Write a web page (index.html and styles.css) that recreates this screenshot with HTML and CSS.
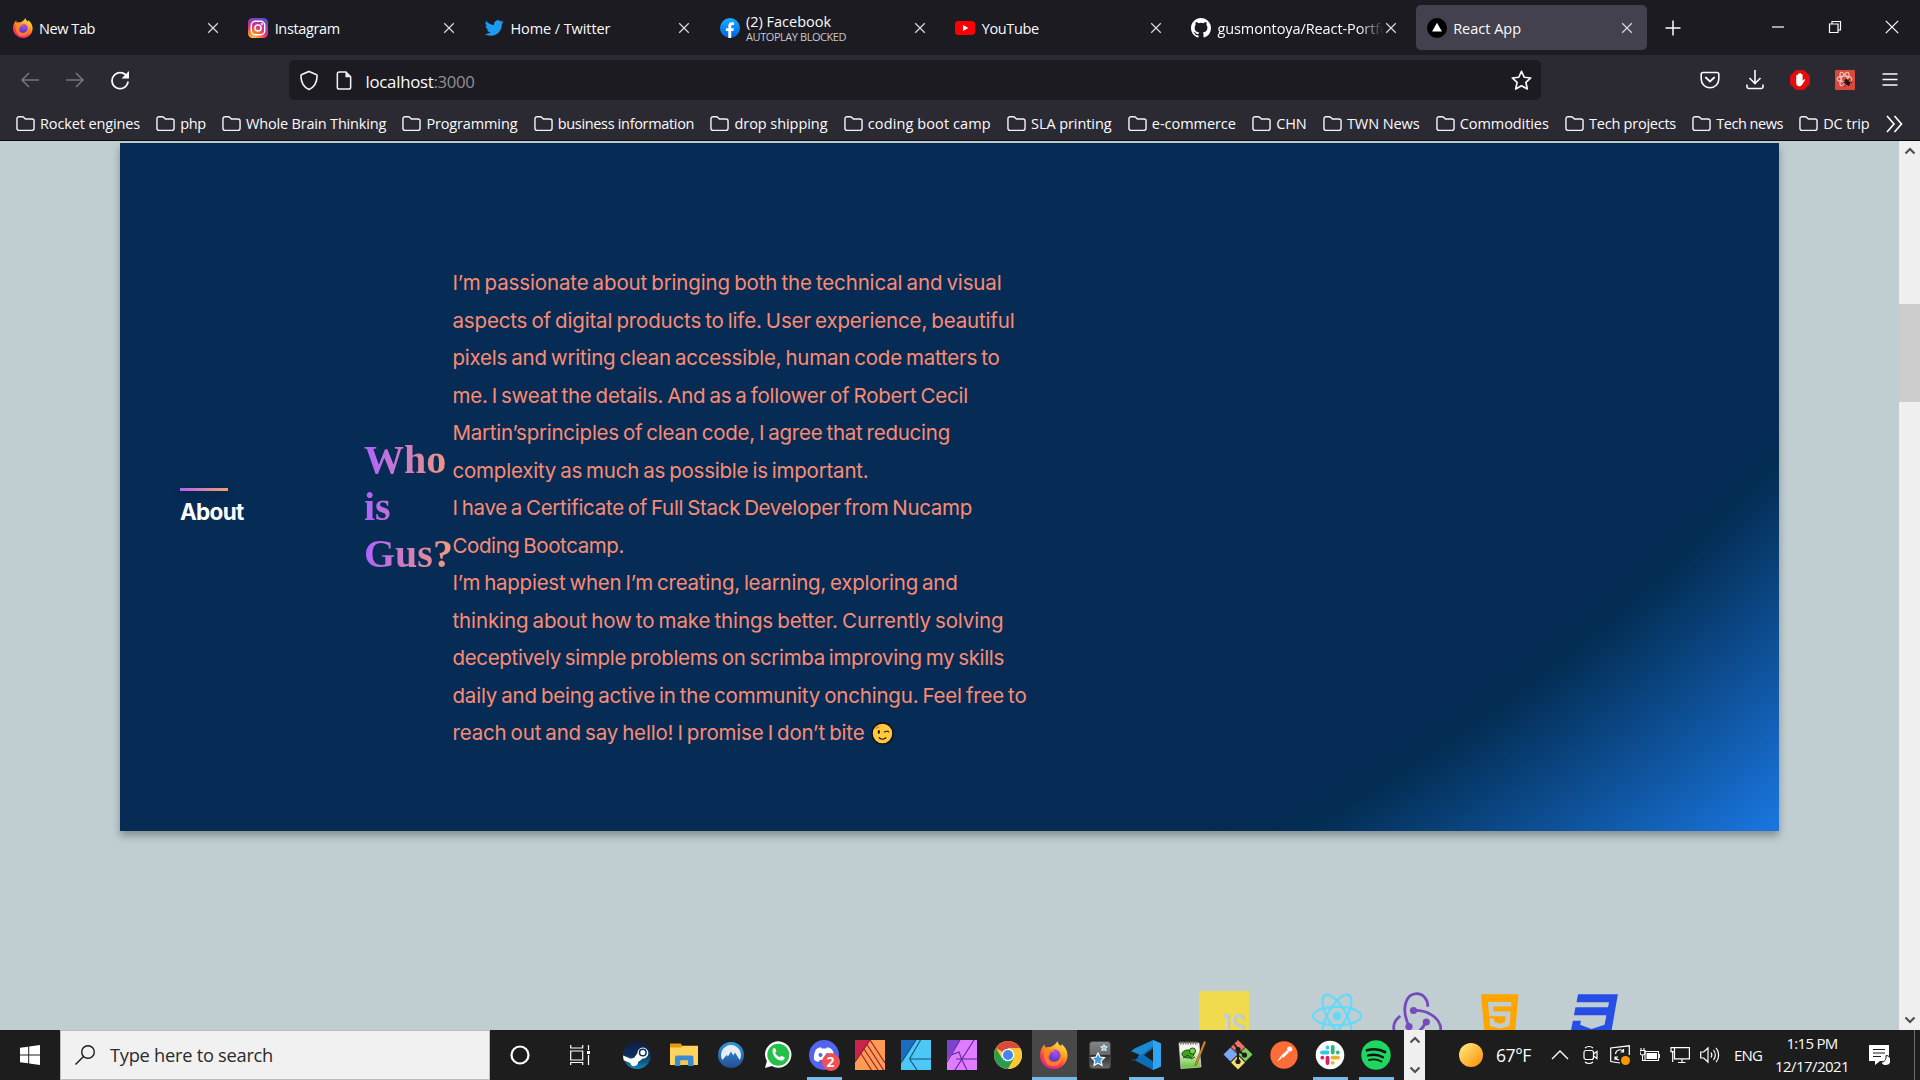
FILE: index.html
```html
<!DOCTYPE html>
<html lang="en">
<head>
<meta charset="utf-8">
<title>React App</title>
<link rel="stylesheet" href="styles.css">
</head>
<body>
<svg class="defs" width="0" height="0" aria-hidden="true">
  <defs>
    <linearGradient id="ffBody" x1=".8" y1="0" x2=".25" y2="1"><stop offset="0" stop-color="#fff04a"/><stop offset=".4" stop-color="#ff9a1f"/><stop offset=".7" stop-color="#ff3a4a"/><stop offset="1" stop-color="#e0219a"/></linearGradient>
    <radialGradient id="ffGlobe" cx=".6" cy=".25" r=".8"><stop offset="0" stop-color="#b04bf5"/><stop offset="1" stop-color="#4a3cc4"/></radialGradient>
    <radialGradient id="ig" cx=".25" cy="1.05" r="1.15"><stop offset="0" stop-color="#ffd95a"/><stop offset=".3" stop-color="#ff7a2f"/><stop offset=".6" stop-color="#d62e87"/><stop offset="1" stop-color="#5a4bd6"/></radialGradient>
    <linearGradient id="fb" x1="0" y1="0" x2="0" y2="1"><stop offset="0" stop-color="#19aeff"/><stop offset="1" stop-color="#0062e0"/></linearGradient>
    <linearGradient id="steam" x1="0" y1="0" x2="0" y2="1"><stop offset="0" stop-color="#131a3c"/><stop offset=".5" stop-color="#0d2f5c"/><stop offset="1" stop-color="#1387b8"/></linearGradient>
    <linearGradient id="nord" x1="0" y1="0" x2="0" y2="1"><stop offset="0" stop-color="#2e9bdc"/><stop offset="1" stop-color="#254b92"/></linearGradient>
    <linearGradient id="star" x1="0" y1="0" x2="0" y2="1"><stop offset="0" stop-color="#858585"/><stop offset=".48" stop-color="#6a6a6a"/><stop offset=".5" stop-color="#2c2c2c"/><stop offset="1" stop-color="#6c6c6c"/></linearGradient>
    <linearGradient id="sun" x1="0" y1="0" x2="1" y2="1"><stop offset=".1" stop-color="#ffe478"/><stop offset="1" stop-color="#ff8c00"/></linearGradient>
    <linearGradient id="npp" x1="0" y1="0" x2="0" y2="1"><stop offset=".3" stop-color="#f4f6f0"/><stop offset="1" stop-color="#5fc428"/></linearGradient>
    <symbol id="firefox" viewBox="0 0 28 28">
      <path d="M17.500 0c.3 2.800 2 4 3.700 5.300l.3-2.200c3.400 2.500 5.900 6.600 6 11.100C27.500 22 21.500 28 14 28S0 22 0 14.500C0 10 1.500 6.500 4.300 3.400l1.200 3.200c1.500-.6 3-.7 4.400-.4C12.500 4.900 16 3.500 17.500 0z" fill="url(#ffBody)"/>
      <circle cx="14.500" cy="14.500" r="6" fill="url(#ffGlobe)"/>
      <path d="M4 8c3-1 5-.6 6.500.6 1.700-.2 3.300.1 4.500.8-.8 1.600-3.300 1.700-4.700 2.500 0 1.500-.7 2-1.400 3-1.200 3 1 6 4.600 6.200 4.500.2 7-3 6.900-6.100 3 5-1 10.300-7 10.300C7 25.300 2 19 4 8z" fill="#ff8a26" opacity=".85"/>
    </symbol>
    <symbol id="folder" viewBox="0 0 20 18"><path d="M1 13.500V3.500A2.200 2.200 0 0 1 3.200 1.300h3.300c.8 0 1.300.3 1.800.8L9.900 3.700h6.900A2.200 2.200 0 0 1 19 5.900v7.600a2.200 2.200 0 0 1-2.200 2.200H3.200A2.200 2.200 0 0 1 1 13.500z" fill="none" stroke="#f3f3f5" stroke-width="1.500"/></symbol>
    <symbol id="close" viewBox="0 0 12 12"><path d="M1.200 1.200l9.600 9.600M10.800 1.200l-9.600 9.600" stroke="#d8d8dc" stroke-width="1.250" fill="none"/></symbol>
    <symbol id="up" viewBox="0 0 12 8"><path d="M1.500 6.500L6 2l4.500 4.500" stroke="#505050" stroke-width="2.200" fill="none"/></symbol>
    <symbol id="down" viewBox="0 0 12 8"><path d="M1.500 1.500L6 6l4.500-4.500" stroke="#505050" stroke-width="2.200" fill="none"/></symbol>
  </defs>
</svg>

<header class="tabs">
  <div class="tab"><svg class="fav"><use href="#firefox"/></svg><span class="lbl" data-w="56">New Tab</span><svg class="x"><use href="#close"/></svg></div>
  <div class="tab"><svg class="fav" viewBox="0 0 20 20"><rect width="20" height="20" rx="4.500" fill="url(#ig)"/><rect x="3.300" y="3.300" width="13.400" height="13.400" rx="4" fill="none" stroke="#fff" stroke-width="1.500"/><circle cx="10" cy="10" r="3.100" fill="none" stroke="#fff" stroke-width="1.500"/><circle cx="14" cy="6" r="1" fill="#fff"/></svg><span class="lbl" data-w="65">Instagram</span><svg class="x"><use href="#close"/></svg></div>
  <div class="tab"><svg class="fav" viewBox="0 0 24 24"><path fill="#1d9bf0" d="M23.643 4.937c-.835.370-1.732.620-2.675.733.962-.576 1.700-1.490 2.048-2.578-.900.534-1.897.922-2.958 1.130-.850-.904-2.060-1.470-3.400-1.470-2.572 0-4.658 2.086-4.658 4.660 0 .364.042.718.120 1.060-3.873-.195-7.304-2.050-9.602-4.868-.400.690-.630 1.490-.630 2.342 0 1.616.823 3.043 2.072 3.878-.764-.025-1.482-.234-2.110-.583v.060c0 2.257 1.605 4.140 3.737 4.568-.392.106-.803.162-1.227.162-.300 0-.593-.028-.877-.082.593 1.850 2.313 3.198 4.352 3.234-1.595 1.250-3.604 1.995-5.786 1.995-.376 0-.747-.022-1.112-.065 2.062 1.323 4.510 2.093 7.140 2.093 8.570 0 13.255-7.098 13.255-13.254 0-.200-.005-.402-.014-.602.910-.658 1.700-1.477 2.323-2.410z"/></svg><span class="lbl" data-w="100">Home / Twitter</span><svg class="x"><use href="#close"/></svg></div>
  <div class="tab"><svg class="fav" viewBox="0 0 20 20"><circle cx="10" cy="10" r="10" fill="url(#fb)"/><path d="M8.300 20v-6.900H5.900v-2.900h2.400V8.100c0-2.500 1.400-3.800 3.600-3.800.7 0 1.500.1 2.100.2V7h-1.200c-1.200 0-1.600.7-1.600 1.500v1.700h2.700l-.5 2.900h-2.200V20z" fill="#fff"/></svg><span class="stack"><span class="lbl" data-w="85">(2) Facebook</span><span class="sub" data-w="100">AUTOPLAY BLOCKED</span></span><svg class="x"><use href="#close"/></svg></div>
  <div class="tab"><svg class="fav" viewBox="0 0 20 20"><rect y="3" width="20" height="14" rx="3.200" fill="#f00"/><path d="M8 7l5.300 3L8 13z" fill="#fff"/></svg><span class="lbl" data-w="57">YouTube</span><svg class="x"><use href="#close"/></svg></div>
  <div class="tab"><svg class="fav" viewBox="0 0 16 16"><path fill="#fff" d="M8 0C3.580 0 0 3.580 0 8c0 3.540 2.290 6.530 5.470 7.590.400.070.550-.170.550-.380 0-.190-.010-.820-.010-1.490-2.010.370-2.530-.490-2.690-.940-.090-.230-.480-.940-.820-1.130-.280-.150-.680-.520-.010-.530.630-.010 1.080.580 1.230.820.720 1.210 1.870.870 2.330.660.070-.520.280-.870.510-1.070-1.780-.200-3.640-.890-3.640-3.950 0-.870.310-1.590.820-2.150-.080-.200-.360-1.020.080-2.120 0 0 .670-.210 2.200.820a7.600 7.600 0 0 1 4 0c1.530-1.040 2.200-.820 2.200-.820.440 1.100.160 1.920.080 2.120.510.560.820 1.270.820 2.150 0 3.070-1.870 3.750-3.650 3.950.290.250.540.730.540 1.480 0 1.070-.010 1.930-.010 2.200 0 .210.150.460.550.380A8.010 8.010 0 0 0 16 8c0-4.420-3.580-8-8-8z"/></svg><span class="lbl clip"><span data-w="187">gusmontoya/React-Portfolio</span></span><svg class="x"><use href="#close"/></svg></div>
  <div class="tab active"><svg class="fav" viewBox="0 0 20 20"><circle cx="10" cy="10" r="10"/><path d="M10 4.800l4.900 8.600H5.100z" fill="#fff"/></svg><span class="lbl" data-w="68">React App</span><svg class="x"><use href="#close"/></svg></div>
  <svg class="plus" viewBox="0 0 16 16"><path d="M8 .5v15M.5 8h15" stroke="#fbfbfe" stroke-width="1.500"/></svg>
  <div class="winctl">
    <svg viewBox="0 0 14 14"><path d="M1 7h12" stroke="#fff" stroke-width="1.200"/></svg>
    <svg viewBox="0 0 14 14"><path d="M1.500 4h8.500v8.500H1.500zM4 4V1.500h8.500V10H10" fill="none" stroke="#fff" stroke-width="1.200"/></svg>
    <svg viewBox="0 0 14 14"><path d="M.8.800l12.400 12.400M13.200.8L.8 13.200" stroke="#fff" stroke-width="1.200"/></svg>
  </div>
</header>

<nav class="toolbar">
  <div class="navbtns">
    <svg viewBox="0 0 20 20"><path d="M19 10H2M9 3l-7 7 7 7" fill="none" stroke="#77767e" stroke-width="1.500"/></svg>
    <svg viewBox="0 0 20 20"><path d="M1 10h17M11 3l7 7-7 7" fill="none" stroke="#77767e" stroke-width="1.500"/></svg>
    <svg viewBox="0 0 20 20"><path d="M17.600 8A8 8 0 1 0 18 11.500" fill="none" stroke="#fbfbfe" stroke-width="1.800"/><path d="M19 1v7.500h-7.500z" fill="#fbfbfe"/></svg>
  </div>
  <div class="url">
    <svg class="shield" viewBox="0 0 20 22"><path d="M10 1.500l7.500 3.200c.8.300 1 .8 1 1.600C18.300 13 15 18.300 10 20.500 5 18.300 1.700 13 1.500 6.300c0-.8.200-1.300 1-1.600z" fill="none" stroke="#f3f3f5" stroke-width="1.700"/></svg>
    <svg class="page" viewBox="0 0 16 20"><path d="M3 1h7l5 5v11a2 2 0 0 1-2 2H3a2 2 0 0 1-2-2V3a2 2 0 0 1 2-2z" fill="none" stroke="#f3f3f5" stroke-width="1.600"/><path d="M9.500 1v5.500H15z" fill="#f3f3f5"/></svg>
    <span class="addr"><span data-w="68">localhost</span><span class="port" data-w="41">:3000</span></span>
    <svg class="bstar" viewBox="0 0 20 20"><path d="M10 1.200l2.600 5.700 6.200.7-4.600 4.200 1.300 6.300L10 15l-5.500 3.100 1.300-6.300L1.200 7.600l6.200-.7z" fill="none" stroke="#fbfbfe" stroke-width="1.600" stroke-linejoin="round"/></svg>
  </div>
  <div class="tools">
    <svg viewBox="0 0 20 20"><path d="M3 2.500h14a1.800 1.800 0 0 1 1.800 1.800V9A8.800 8.800 0 0 1 1.200 9V4.300A1.800 1.800 0 0 1 3 2.500z" fill="none" stroke="#fbfbfe" stroke-width="1.600"/><path d="M5.800 7.500L10 11.500l4.200-4" fill="none" stroke="#fbfbfe" stroke-width="1.800" stroke-linecap="round"/></svg>
    <svg viewBox="0 0 20 20"><path d="M10 0v13M4.500 8l5.500 5.500L15.500 8M2 14.500v2.200A1.800 1.800 0 0 0 3.800 18.500h12.400a1.800 1.800 0 0 0 1.800-1.800v-2.200" fill="none" stroke="#fbfbfe" stroke-width="1.600"/></svg>
    <svg viewBox="0 0 20 20"><path d="M6 0h8l6 6v8l-6 6H6l-6-6V6z" fill="#e40d0d"/><path d="M6.200 10.500V5.800a.8.8 0 0 1 1.600 0V4.400a.8.8 0 0 1 1.600 0v-.6a.8.8 0 0 1 1.600 0v1a.8.8 0 0 1 1.600 0v6l1.300-1.300c.8-.6 1.500.1 1 .8l-3 4.700c-.7 1-1.500 1.300-2.700 1.300-2 0-3-1.500-3-3.500z" fill="#fff"/></svg>
    <svg viewBox="0 0 20 20"><rect width="20" height="20" rx="1" fill="#d9483b"/><g fill="none" stroke="#f5c7c0" stroke-width="1.100"><ellipse cx="9.500" cy="9" rx="7.500" ry="3"/><ellipse cx="9.500" cy="9" rx="7.500" ry="3" transform="rotate(60 9.500 9)"/><ellipse cx="9.500" cy="9" rx="7.500" ry="3" transform="rotate(120 9.500 9)"/></g><g transform="rotate(-30 12 12)"><ellipse cx="12" cy="12.500" rx="2.200" ry="3.700" fill="#301010"/><path d="M8 10l8 5M16 10l-8 5M8 12.500h8" stroke="#301010" stroke-width=".8"/></g></svg>
    <svg viewBox="0 0 20 20"><path d="M2.500 4h15M2.500 9.500h15M2.500 15h15" stroke="#fbfbfe" stroke-width="1.500"/></svg>
  </div>
</nav>

<nav class="bookmarks">
  <a><svg><use href="#folder"/></svg><span data-w="100">Rocket engines</span></a>
  <a><svg><use href="#folder"/></svg><span data-w="25.500">php</span></a>
  <a><svg><use href="#folder"/></svg><span data-w="140">Whole Brain Thinking</span></a>
  <a><svg><use href="#folder"/></svg><span data-w="91">Programming</span></a>
  <a><svg><use href="#folder"/></svg><span data-w="136.500">business information</span></a>
  <a><svg><use href="#folder"/></svg><span data-w="93">drop shipping</span></a>
  <a><svg><use href="#folder"/></svg><span data-w="123">coding boot camp</span></a>
  <a><svg><use href="#folder"/></svg><span data-w="80.500">SLA printing</span></a>
  <a><svg><use href="#folder"/></svg><span data-w="84">e-commerce</span></a>
  <a><svg><use href="#folder"/></svg><span data-w="30.500">CHN</span></a>
  <a><svg><use href="#folder"/></svg><span data-w="72.500">TWN News</span></a>
  <a><svg><use href="#folder"/></svg><span data-w="89">Commodities</span></a>
  <a><svg><use href="#folder"/></svg><span data-w="87">Tech projects</span></a>
  <a><svg><use href="#folder"/></svg><span data-w="66.500">Tech news</span></a>
  <a><svg><use href="#folder"/></svg><span data-w="46.500">DC trip</span></a>
  <svg class="more" viewBox="0 0 17 18"><path d="M1 1l7 8-7 8M8.500 1l7 8-7 8" fill="none" stroke="#fbfbfe" stroke-width="1.700"/></svg>
</nav>

<div class="viewport">
  <main class="page-body">
    <section class="card">
      <div class="about"><i class="bar"></i><h3><span data-w="63.500">About</span></h3></div>
      <h1 class="who">Who<br>is<br>Gus?</h1>
      <p class="bio">
        <span data-w="549">I’m passionate about bringing both the technical and visual</span><br>
        <span data-w="562">aspects of digital products to life. User experience, beautiful</span><br>
        <span data-w="547">pixels and writing clean accessible, human code matters to</span><br>
        <span data-w="515.500">me. I sweat the details. And as a follower of Robert Cecil</span><br>
        <span data-w="497.500">Martin’sprinciples of clean code, I agree that reducing</span><br>
        <span data-w="416">complexity as much as possible is important.</span><br>
        <span data-w="519.500">I have a Certificate of Full Stack Developer from Nucamp</span><br>
        <span data-w="171.500">Coding Bootcamp.</span><br>
        <span data-w="505">I’m happiest when I’m creating, learning, exploring and</span><br>
        <span data-w="551">thinking about how to make things better. Currently solving</span><br>
        <span data-w="551.500">deceptively simple problems on scrimba improving my skills</span><br>
        <span data-w="574">daily and being active in the community onchingu. Feel free to</span><br>
        <span data-w="412">reach out and say hello! I promise I don’t bite</span><svg class="wink" viewBox="0 0 22 22"><circle cx="11" cy="11" r="10" fill="#ffc83d" stroke="#101010" stroke-width="1.300"/><ellipse cx="7.500" cy="9.500" rx="1" ry="1.800" fill="#111"/><path d="M12.500 10c1-1.400 3.500-1.600 4.800-.3" fill="none" stroke="#111" stroke-width="1.100"/><path d="M4.500 6.500c.8-1.500 2.200-2 3.500-1.700" fill="none" stroke="#d08a10" stroke-width="1.200"/><path d="M7.500 14.800c2 2 5 2 7 0" fill="none" stroke="#111" stroke-width="1.200"/></svg>
      </p>
    </section>
    <section class="skills">
      <svg class="js" viewBox="0 0 50 50"><rect width="50" height="50" fill="#f0db4f"/><text x="20" y="46" font-size="34" font-weight="700" textLength="27" lengthAdjust="spacingAndGlyphs" fill="#c0ced2">JS</text></svg>
      <svg class="react" viewBox="0 0 50 50"><g fill="none" stroke="#61dafb" stroke-width="2.200"><ellipse cx="25" cy="25" rx="24" ry="9.200"/><ellipse cx="25" cy="25" rx="24" ry="9.200" transform="rotate(60 25 25)"/><ellipse cx="25" cy="25" rx="24" ry="9.200" transform="rotate(120 25 25)"/></g><circle cx="25" cy="25" r="4.300" fill="#61dafb"/></svg>
      <svg class="redux" viewBox="0 0 50 50"><g fill="none" stroke="#764abc" stroke-width="2.800"><path d="M35.800 15.700C36 8 31 2.700 24.500 2.700 15 2.700 8 16 17 35"/><path d="M21.500 19.500C33 19 45 24 48.500 35c1 5-1 9-4 10"/><path d="M8.300 25C3 29 .5 35 2.500 41c3 6 12 8 21 2 4-2.500 8-7 10.500-12"/></g><g fill="#764abc"><circle cx="21.500" cy="19.500" r="3.600"/><circle cx="17" cy="35.500" r="3.600"/><circle cx="34.300" cy="31" r="3.600"/></g></svg>
      <svg class="html5" viewBox="0 0 384 512"><path fill="#ffa500" d="M0 32l34.900 395.800L191.500 480l157.600-52.200L384 32H0zm308.200 127.900H124.400l4.100 49.400h175.600l-13.600 148.400-97.900 27v.3h-1.100l-98.700-27.300-6-75.800h47.700L138 320l53.500 14.500 53.700-14.500 6-62.200H84.300L71.500 112.200h241.100l-4.400 47.700z"/></svg>
      <svg class="css3" viewBox="0 0 512 512"><path fill="#264de4" d="M480 32l-64 368-223.300 80L0 400l19.600-94.800h82l-8 40.600L210 390.200l134.100-44.400 18.800-97.100H29.500l16-82h333.200l10.500-52.700H56.400l16.300-82H480z"/></svg>
    </section>
  </main>
  <aside class="scrollbar"><svg><use href="#up"/></svg><i class="thumb"></i><svg><use href="#down"/></svg></aside>
</div>

<footer class="taskbar">
  <div class="start"><svg viewBox="0 0 20 20"><path d="M0 2.800L8.200 1.700v7.800H0zM9.200 1.500L20 0v9.500H9.200zM0 10.500h8.200v7.800L0 17.200zM9.200 10.500H20V20L9.200 18.500z" fill="#fff"/></svg></div>
  <div class="search"><svg viewBox="0 0 20 20"><circle cx="13" cy="7" r="6.300" fill="none" stroke="#1b1b1b" stroke-width="1.400"/><path d="M8.500 11.500L.5 19.500" stroke="#1b1b1b" stroke-width="1.400"/></svg><span data-w="163">Type here to search</span></div>
  <div class="sys">
    <svg viewBox="0 0 20 20"><circle cx="10" cy="10" r="8.500" fill="none" stroke="#fff" stroke-width="2.200"/></svg>
    <svg viewBox="0 0 20 20"><path d="M.7 0v3h12V0M.7 6h12v9H.7zM.7 20v-2.500h12V20M18.500 0v5M18.500 10v10" fill="none" stroke="#fff" stroke-width="1.200"/><path d="M17 6h3v3h-3z" fill="#fff"/></svg>
  </div>
  <div class="apps">
    <div class="app wide"><svg viewBox="0 0 30 30"><circle cx="15" cy="15" r="14" fill="url(#steam)"/><path d="M1 15.500l8 3.300c1-.6 2-.8 3-.7l3.400-4.900a5.500 5.500 0 1 1 5.500 5.400l-4.800 3.500a4 4 0 0 1-7.900.9L1.700 20.300z" fill="#fff"/><circle cx="20.800" cy="12.500" r="3.300" fill="#fff" stroke="#0d2f5c" stroke-width="1.500"/></svg></div>
    <div class="app wide"><svg viewBox="0 0 30 30"><path d="M1 3.500h10.500L14 6.200V12H1z" fill="#e09e0c"/><path d="M1 7.500h11l2-1.800h15V25H1z" fill="#ffd35c"/><path d="M6 26v-8.500a2 2 0 0 1 2-2h14.500a2 2 0 0 1 2 2V26H19v-5.500h-7.500V26z" fill="#3b8bd0"/><path d="M11.500 20.500H19V25h-7.500z" fill="#f7c548"/></svg></div>
    <div class="app wide"><svg viewBox="0 0 30 30"><circle cx="15" cy="15" r="13" fill="url(#nord)"/><path d="M6.300 20A10 10 0 1 1 23.700 20L19 12.500l-1.700 3-2.300-4-3 5-1.200-1.500z" fill="#e6edf5"/></svg></div>
    <div class="app wide"><svg viewBox="0 0 30 30"><path d="M2 28l1.900-6.700A13.200 13.200 0 1 1 8.700 26z" fill="#fff"/><circle cx="15.300" cy="14.700" r="11" fill="#25c04a"/><path d="M10.200 8.500c1-1 1.800-.6 2.300.6l.8 2c.2.700-.9 1.500-1.200 1.900 1.100 2 2.600 3.400 4.900 4.300.6-.4 1.200-1.700 1.900-1.400l2.500 1.300c.6.400.1 2.300-1.300 3-4.600 2.200-13-5.500-9.900-11.700z" fill="#fff"/></svg></div>
    <div class="app on"><svg viewBox="0 0 30 30"><circle cx="15" cy="15" r="15" fill="#5663ee"/><path d="M7 9.500c1.800-1.500 3.500-2 5-2.200l.7 1.200h4.600l.7-1.200c1.500.2 3.200.7 5 2.200 1.700 3 2.400 6.500 2 10.300-1.500 1.200-3 1.800-4.500 2.100l-1.200-2h-8.600l-1.200 2c-1.500-.3-3-.9-4.500-2.100-.4-3.800.3-7.300 2-10.300z" fill="#fff"/><circle cx="11.500" cy="15" r="2" fill="#5663ee"/><circle cx="18.500" cy="15" r="2" fill="#5663ee"/></svg><b class="badge">2</b></div>
    <div class="app"><svg viewBox="0 0 30 30"><path d="M0 0h30v30H0z" fill="#ff9b50"/><path d="M0 0h15L0 22z" fill="#c9244b"/><path d="M15 0L0 22M15 0l15 23M12 4.500L28.500 30M9 9l14 21M6 13.500L16.500 30" stroke="#8d1d3c" stroke-width="1.100" fill="none"/></svg></div>
    <div class="app"><svg viewBox="0 0 30 30"><path d="M0 0h30v30H0z" fill="#4dc8f5"/><path d="M0 0h15L0 23z" fill="#1c6cc0"/><path d="M0 23L15 0M8.500 19L19.500 0M8.500 19H30M8.500 19l7.500 11" stroke="#154f82" stroke-width="1.100" fill="none"/></svg></div>
    <div class="app"><svg viewBox="0 0 30 30"><path d="M0 0h30v30H0z" fill="#e07cff"/><path d="M0 0h13L0 20z" fill="#7a45cc"/><path d="M13 0L0 22M4 15l8-3 3 8M27 0L8 30M9 19h21M15 20l5 10" stroke="#5c2896" stroke-width="1.100" fill="none"/></svg></div>
    <div class="app"><svg viewBox="0 0 30 30"><circle cx="15" cy="15" r="14" fill="#fcc934"/><path d="M15 15L2.900 8A14 14 0 0 1 27.100 8z" fill="#d94a3d"/><path d="M2.900 8A14 14 0 0 0 15 29l6-10.500L15 15 9 18.500z" fill="#2a9b52"/><path d="M27.100 8H15v7l6 3.500L15 29A14 14 0 0 0 27.100 8z" fill="#fcc934"/><circle cx="15" cy="15" r="6.300" fill="#fff"/><circle cx="15" cy="15" r="5" fill="#4285f4"/></svg></div>
    <div class="app on current"><svg><use href="#firefox"/></svg></div>
    <div class="app"><svg viewBox="0 0 30 30"><rect x="4.500" y="1.500" width="21" height="27" rx="3" fill="url(#star)" stroke="#444"/><path d="M13 13l2 4 4.500.7-3.300 3.100.8 4.500-4-2.200-4 2.200.8-4.500-3.300-3.100 4.500-.7z" fill="#3d9be0" stroke="#fff" stroke-width="1.200"/><path d="M19 4.500l1 2 2.300.3-1.600 1.600.4 2.300-2.100-1.100-2.100 1.100.4-2.300-1.600-1.600 2.300-.3z" fill="#8cc8ee" stroke="#fff" stroke-width=".8"/></svg></div>
    <div class="app on"><svg viewBox="0 0 30 30"><path d="M22 0l8 3.500v23L22 30 2 12l-2-.5L2.500 9z" fill="#1a8ad4"/><path d="M22 30L.3 18.500l2.200 2.500L22 6z" fill="#0a6fb8"/><path d="M22 0l8 3.500v23L22 30z" fill="#2da5f0"/><path d="M22 8.500v13L13 15z" fill="#1d1d1d"/><path d="M1 11.500l8 3.500-8 4.500L4.500 15z" fill="#1d1d1d"/></svg></div>
    <div class="app"><svg viewBox="0 0 30 30"><path d="M2 3h20l2 24-20 1.500z" fill="url(#npp)" stroke="#ddd" stroke-width=".7"/><path d="M3 3h18" stroke="#777" stroke-width="3" stroke-dasharray="1.500 1"/><ellipse cx="11" cy="14" rx="6" ry="4" fill="#42a51f" stroke="#1c4d10"/><circle cx="15.500" cy="11" r="3" fill="#7bd54c" stroke="#1c4d10"/><path d="M6 18l5-3 3 4 4-2" stroke="#1c4d10" fill="none"/><path d="M27 1l2 1-9 22-2 2 .5-3z" fill="#d5952d" stroke="#6b3a0c" stroke-width=".5"/></svg></div>
    <div class="app"><svg viewBox="0 0 30 30"><path d="M15 0l7 7-7 7-7-7z" fill="#f07167"/><path d="M7.500 7.500l7 7-7 7-7-7z" fill="#7ea6f2"/><path d="M22.500 7.500l7 7-7 7-7-7z" fill="#7fcc5c"/><path d="M15 15.500l7 7-7 7-7-7z" fill="#f6dc70"/><path d="M11 4l4 5v13M15 10l6 5" stroke="#1d1d1d" stroke-width="2" fill="none"/><circle cx="15" cy="9.500" r="2.600" fill="#1d1d1d"/><circle cx="15" cy="21.500" r="2.600" fill="#1d1d1d"/><circle cx="21.500" cy="15" r="2.600" fill="#1d1d1d"/></svg></div>
    <div class="app"><svg viewBox="0 0 30 30"><circle cx="15" cy="15" r="13.700" fill="#ff6c37"/><path d="M7.500 22.500l4-6 6.500-6.200 2 2-5.500 5.200z" fill="#fff"/><circle cx="20.700" cy="9" r="2.600" fill="#fff"/><path d="M12 17l2 1-6.500 4.500" fill="none" stroke="#e05a2a" stroke-width=".8"/></svg></div>
    <div class="app on"><svg viewBox="0 0 30 30"><circle cx="15" cy="15" r="14.300" fill="#fff"/><g fill="none" stroke-width="3.800" stroke-linecap="round"><path d="M12.500 7.500v0M7 12.500h5.500" stroke="#36c5f0"/><path d="M17.700 7v5.500M22.800 12.500v0" stroke="#2eb67d"/><path d="M17.700 17.700H23M17.700 22.800v0" stroke="#ecb22e"/><path d="M12.500 17.700V23M7.300 17.700v0" stroke="#e01e5a"/></g></svg></div>
    <div class="app on"><svg viewBox="0 0 30 30"><circle cx="15" cy="15" r="14.700" fill="#1ed760"/><g fill="none" stroke="#121212" stroke-linecap="round"><path d="M6 10.300c6-1.700 12.500-1.300 18 1.700" stroke-width="2.700"/><path d="M7 15.500c5-1.300 10.500-.9 15 1.700" stroke-width="2.300"/><path d="M8 20c4-1 8.500-.7 12.300 1.500" stroke-width="1.900"/></g></svg></div>
  </div>
  <div class="pager"><svg><use href="#up"/></svg><svg><use href="#down"/></svg></div>
  <div class="weather"><svg viewBox="0 0 24 24"><circle cx="12" cy="12" r="12" fill="url(#sun)"/></svg><span data-w="35">67°F</span></div>
  <div class="tray">
    <svg viewBox="0 0 20 20"><path d="M2 14l8-8 8 8" fill="none" stroke="#fff" stroke-width="1.400"/></svg>
    <svg viewBox="0 0 20 20"><rect x="4" y="5.500" width="9.500" height="9" rx="2" fill="none" stroke="#fff" stroke-width="1.200"/><path d="M13.500 9l3.500-2.500v7L13.500 11M5 3c2-2 6-2 8 0M5 17c2 2 6 2 8 0" fill="none" stroke="#fff" stroke-width="1.200"/></svg>
    <svg viewBox="0 0 20 20"><path d="M19.300 10V.8L.7 3v13.500L10 18" fill="none" stroke="#fff" stroke-width="1.200"/><path d="M5.500 9a4.500 4.500 0 0 1 8-2.500M13.500 4v3h-3M9 15a4.500 4.500 0 0 1-3.700-3M5 15v-3h3" fill="none" stroke="#fff" stroke-width="1.200"/><circle cx="15.500" cy="15.500" r="4.500" fill="#ff9500"/></svg>
    <svg viewBox="0 0 20 20"><path d="M5 6.500h13.500v9H5z" fill="none" stroke="#fff" stroke-width="1.100"/><path d="M6.500 8H17v6H6.500zM18.500 9H20v4h-1.500z" fill="#fff"/><path d="M1 3v2.500M4 3v2.500M0 5.500h5v2a2.500 2.500 0 0 1-5 0zM2.500 10v5.500H5" fill="none" stroke="#fff" stroke-width="1.100"/></svg>
    <svg viewBox="0 0 20 20"><path d="M5 2.600h14.400v11.200H4.500V7M12 14v4M8 17.500h7.500M1 2.600h3.500v4H1zM2.700 6.600V17" fill="none" stroke="#fff" stroke-width="1.200"/></svg>
    <svg viewBox="0 0 20 20"><path d="M.7 7v6h3l4.300 4V3L3.700 7zM11 7.500c1 1.500 1 3.500 0 5M13.500 5c2.200 3 2.200 7 0 10M16 2.800c3.500 4 3.500 10.400 0 14.400" fill="none" stroke="#fff" stroke-width="1.200"/></svg>
  </div>
  <span class="lang" data-w="28">ENG</span>
  <div class="clock"><span data-w="51">1:15 PM</span><span data-w="74">12/17/2021</span></div>
  <svg class="notif" viewBox="0 0 21 20"><path d="M0 0h20v16h-9l-5 4v-4H0z" fill="#fff"/><path d="M4 4.500h12M4 8h12M4 11.500h8" stroke="#1d1d1d" stroke-width="1.200"/><path d="M17 10.500a5 5 0 1 1-5 6.500c3 .5 5.500-2 5-6.500z" fill="#fff" stroke="#1d1d1d"/></svg>
  <i class="peek"></i>
</footer>
<script src="fit.js"></script>
</body>
</html>
```
FILE: styles.css
```css
* { box-sizing: border-box; }
html, body { margin: 0; height: 100%; overflow: hidden; }
body {
  display: flex; flex-direction: column; width: 1920px; height: 1080px;
  font-family: "Open Sans", "Noto Sans", sans-serif; font-size: 14.5px;
  color: #fbfbfe; background: #1c1b22;
}
svg { display: block; flex: none; }
.defs { position: absolute; }
[data-w] { display: inline-block; white-space: nowrap; }

/* tab strip */
.tabs { display: flex; height: 55px; padding: 5px 0 0 2px; background: #1c1b22; }
.tab { display: flex; align-items: center; width: 231px; height: 45px; margin-right: 4.700px; padding: 1px 14px 0 10.500px; border-radius: 5px; }
.tab.active { background: #42414d; }
.fav { width: 20px; height: 20px; margin-right: 6.500px; }
.lbl { line-height: 20px; padding-top: 1px; }
.tab .x { width: 12px; height: 12px; margin-left: auto; }
.stack { display: flex; flex-direction: column; align-items: flex-start; }
.stack .lbl { line-height: 17px; padding: 0; }
.sub { font-size: 11px; line-height: 14px; color: #c9c9cd; }
.clip { width: 167px; overflow: hidden; -webkit-mask-image: linear-gradient(to right, #000 85%, transparent); mask-image: linear-gradient(to right, #000 85%, transparent); }
.plus { width: 16px; height: 16px; margin: 15px 0 0 13px; }
.winctl { display: flex; gap: 43px; margin: 15px 21.500px 0 auto; }
.winctl svg { width: 14px; height: 14px; }

/* navigation toolbar */
.toolbar { display: flex; align-items: center; height: 50px; background: #2b2a33; padding-right: 20px; }
.navbtns { display: flex; gap: 25px; width: 289px; padding-left: 20px; }
.navbtns svg { width: 20px; height: 20px; }
.url { display: flex; align-items: center; width: 1252px; height: 40px; padding: 0 9px 0 10px; border-radius: 5px; background: #1c1b22; }
.shield { width: 20px; height: 21px; }
.page { width: 16px; height: 19px; margin: 0 13.500px 0 17px; }
.addr { font-size: 16.800px; line-height: 24px; padding-top: 3px; }
.port { color: #8f8f98; }
.bstar { width: 21px; height: 21px; margin-left: auto; }
.tools { display: flex; gap: 25px; margin-left: auto; }
.tools svg { width: 20px; height: 20px; }

/* bookmarks */
.bookmarks { display: flex; align-items: center; height: 36px; padding: 2px 16px 0 16px; background: #2b2a33; border-bottom: 1px solid #0c0c0d; }
.bookmarks a { display: flex; align-items: center; gap: 5px; margin-right: 16.300px; }
.bookmarks a svg { width: 19px; height: 18px; }
.bookmarks a span { line-height: 20px; }
.more { width: 17px; height: 18px; }

/* page */
.viewport { display: flex; height: 889px; background: #c0ced2; }
.page-body { width: 1899px; height: 889px; padding: 2px 120px 0; overflow: hidden; }
.card {
  display: flex; height: 688px; padding: 119px 0 0 60px;
  background: radial-gradient(circle 2325px at 178px -1100px, #062b55 0, #062b55 86%, #032d53 88.200%, #1a78e4 100%);
  box-shadow: 0 5px 8px rgba(0, 0, 0, .3);
}
.about { width: 184px; padding-top: 226px; }
.bar { display: block; width: 48px; height: 3px; background: linear-gradient(to right, #b065f0, #fb9d66); box-shadow: 0 4px 8px rgba(0, 0, 0, .25); }
.about h3 { margin: 6px 0 0; font: 700 22.500px/30px Inter, sans-serif; color: #fff; }
.who {
  width: 89px; height: 141px; margin: 174px 0 0;
  font: 700 40px/47px "Liberation Serif", serif;
  background: linear-gradient(to right, #ad63ff, #f59a74);
  -webkit-background-clip: text; background-clip: text; color: transparent;
}
.bio { margin: 2px 0 0 -.5px; font: 400 20.500px/37.500px Inter, sans-serif; word-spacing: -1.500px; color: #fa8b73; white-space: nowrap; }
.bio span { vertical-align: top; line-height: 37.500px; }
.wink { display: inline-block; width: 23px; height: 23px; margin: 8px 0 0 6.500px; vertical-align: top; }
.skills { display: flex; padding: 160px 0 0 1079px; }
.skills svg { height: 50px; }
.js, .react, .redux { width: 50px; }
.js text { font-family: "Liberation Sans", sans-serif; }
.react { margin-left: 63px; }
.redux { margin-left: 30px; }
.html5 { width: 37.500px; margin-left: 39px; }
.css3 { width: 50px; margin-left: 52px; }

.scrollbar { display: flex; flex-direction: column; align-items: center; width: 21px; height: 889px; padding: 6px 0; background: #f0f0f0; }
.scrollbar svg { width: 12px; height: 8px; }
.scrollbar svg:last-child { margin-top: auto; }
.thumb { width: 21px; height: 98px; margin-top: 149px; background: #cdcdcd; }

/* taskbar */
.taskbar { display: flex; align-items: center; height: 50px; background: #1d1d1d; }
.start { width: 60px; padding-left: 20px; }
.start svg { width: 20px; height: 20px; }
.search { display: flex; align-items: center; gap: 15px; width: 430px; height: 50px; padding-left: 14px; background: #f1f1f1; border: 1px solid #bcbcbc; color: #2b2b2b; font-size: 18.300px; }
.search svg { width: 20px; height: 20px; }
.search span { padding-bottom: 2px; }
.sys { display: flex; gap: 40px; width: 123px; padding-left: 20px; }
.sys svg { width: 20px; height: 20px; }
.apps { display: flex; }
.app { position: relative; display: flex; align-items: center; justify-content: center; width: 46px; height: 50px; }
.app.wide { width: 47px; }
.app svg { width: 30px; height: 30px; }
.app.on { background: linear-gradient(#76b9ed, #76b9ed) center bottom / 35px 3px no-repeat; }
.app.current { background: linear-gradient(#76b9ed, #76b9ed) center bottom / 45px 3px no-repeat, linear-gradient(#484848, #484848) center / 45px 50px no-repeat; }
.app.current svg { width: 28px; height: 28px; }
.badge { position: absolute; left: 20.500px; top: 23px; width: 18px; height: 18px; border-radius: 50%; background: #f04f54; font: 700 14px/18px "Open Sans", sans-serif; text-align: center; }
.pager { display: flex; flex-direction: column; justify-content: space-between; align-items: center; width: 21px; height: 50px; margin-left: 5px; padding: 6px 0; background: #f0f0f0; }
.pager svg { width: 12px; height: 8px; }
.weather { display: flex; align-items: center; gap: 13px; margin-left: 34px; font-size: 17.500px; }
.weather svg { width: 24px; height: 24px; }
.tray { display: flex; gap: 10px; margin-left: 19px; }
.tray svg { width: 20px; height: 20px; }
.lang { margin-left: 14px; padding-bottom: 1px; font-size: 15px; }
.clock { display: flex; flex-direction: column; align-items: center; width: 76px; margin-left: 12px; padding-bottom: 1px; font-size: 15px; line-height: 22.500px; }
.notif { width: 21px; height: 20px; margin-left: 19px; }
.peek { width: 1px; height: 50px; margin: 0 5px 0 auto; background: #6a6a6a; }
```
FILE: fit.js
```js
document.querySelectorAll('[data-w]').forEach(function (el) {
  var natural = el.getBoundingClientRect().width;
  var count = Array.from(el.textContent).length;
  el.style.letterSpacing = ((parseFloat(el.dataset.w) - natural) / count).toFixed(3) + 'px';
});
```
